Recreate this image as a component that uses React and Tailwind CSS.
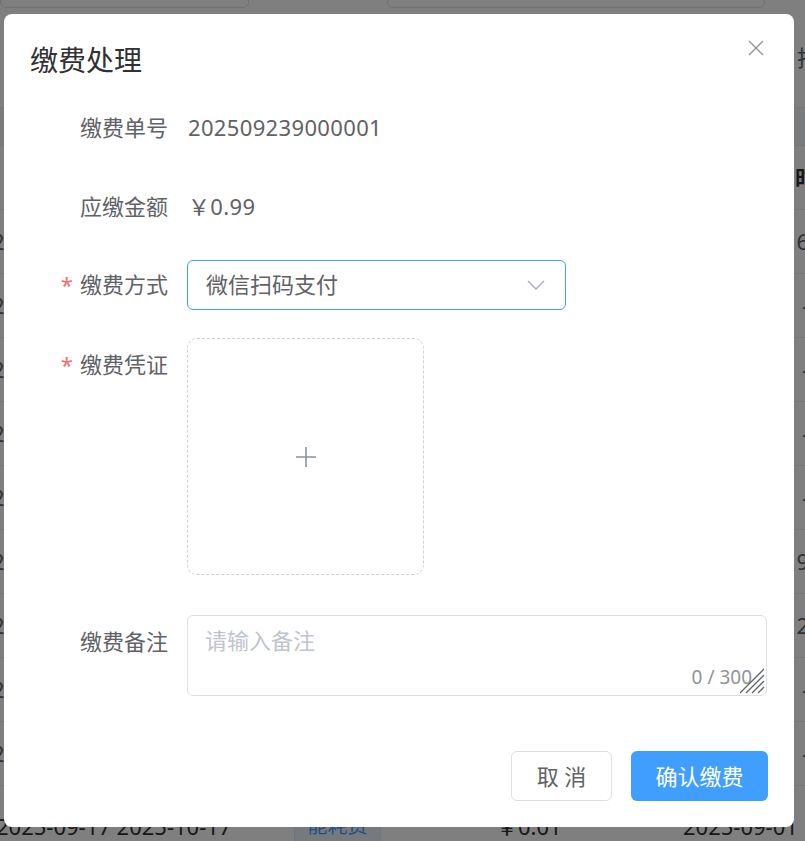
import React from "react";

const font = { fontFamily: '"Noto Sans", "Noto Sans CJK SC", sans-serif' };

function BgRow({ left, right }) {
  return (
    <div className="h-[64px] flex items-center justify-between border-b border-[#ebeef5] text-[22px] text-[#606266] shrink-0">
      <span className="-ml-[8px]">{left}</span>
      <span className="-mr-[4px]">{right}</span>
    </div>
  );
}

export default function App() {
  return (
    <div className="relative w-[805px] h-[841px] overflow-hidden bg-white" style={font}>
      {/* Background page */}
      <div className="flex flex-col w-[805px]">
        <div className="flex h-[8px] items-end">
          <div className="w-[249px] h-[40px] border border-[#dcdfe6] rounded-[6px] shrink-0"></div>
          <div className="w-[138px] shrink-0"></div>
          <div className="w-[378px] h-[40px] border border-[#dcdfe6] rounded-[6px] shrink-0"></div>
        </div>
        <div className="h-[100px] flex items-center justify-end text-[22px] text-[#606266] border-b border-[#ebeef5]">
          <span className="-mr-[36px]">批量</span>
        </div>
        <div className="h-[38px] bg-[#f5f7fa] border-b border-[#ebeef5]"></div>
        <div className="h-[64px] flex items-center justify-end text-[22px] font-bold text-[#303133] border-b border-[#ebeef5]">
          <span className="-mr-[34px]">时间</span>
        </div>
        <BgRow left="2" right="6" />
        <BgRow left="2" right="-" />
        <BgRow left="2" right="-" />
        <BgRow left="2" right="-" />
        <BgRow left="2" right="-" />
        <BgRow left="2" right="9" />
        <BgRow left="2" right="2" />
        <BgRow left="2" right="-" />
        <BgRow left="2" right="-" />
        <div className="h-[64px] flex items-center text-[22px] text-[#303133] shrink-0 pt-[16px]">
          <span className="w-[298px] -ml-[4px] shrink-0">2025-09-17 2025-10-17</span>
          <span className="w-[87px] h-[34px] rounded-[4px] bg-[#ecf5ff] border border-[#d9ecff] text-[#409eff] flex items-center justify-center text-[20px] shrink-0">能耗费</span>
          <span className="ml-[115px] w-[187px] shrink-0">￥0.01</span>
          <span>2025-09-01</span>
        </div>
      </div>

      {/* Overlay */}
      <div className="absolute inset-0 bg-black/50"></div>

      {/* Dialog */}
      <div className="absolute left-[4px] top-[14px] w-[790px] h-[813px] bg-white rounded-[8px] flex flex-col">
        <button className="absolute left-[744px] top-[26px] w-[16px] h-[16px] text-[#909399]">
          <svg width="16" height="16" viewBox="0 0 16 16" fill="none" stroke="currentColor" strokeWidth="1.4">
            <path d="M1 1 L15 15 M15 1 L1 15" />
          </svg>
        </button>

        <div className="pl-[26px] pt-[28px] h-[64px] text-[28px] leading-[36px] text-[#303133]">缴费处理</div>

        <div className="flex flex-col mt-[25px]">
          {/* row 1 */}
          <div className="flex h-[49px] items-center">
            <div className="w-[164px] text-right text-[22px] text-[#606266] shrink-0">缴费单号</div>
            <div className="ml-[20px] text-[22px] tracking-[0.35px] text-[#606266]">202509239000001</div>
          </div>
          {/* row 2 */}
          <div className="flex h-[49px] items-center mt-[30px]">
            <div className="w-[164px] text-right text-[22px] text-[#606266] shrink-0">应缴金额</div>
            <div className="ml-[20px] text-[22px] tracking-[0.35px] text-[#606266]">￥0.99</div>
          </div>
          {/* row 3 */}
          <div className="flex h-[49px] items-center mt-[29px]">
            <div className="w-[164px] text-right text-[22px] text-[#606266] shrink-0">
              <span className="text-[#f56c6c] mr-[7px]">*</span>缴费方式
            </div>
            <div className="ml-[19px] w-[379px] h-[50px] border border-[#409eff] rounded-[6px] flex items-center justify-between pl-[18px] pr-[20px]">
              <span className="text-[22px] text-[#606266]">微信扫码支付</span>
              <svg width="18" height="10" viewBox="0 0 18 10" fill="none" stroke="#a8abb2" strokeWidth="1.4">
                <path d="M1 1 L9 9 L17 1" />
              </svg>
            </div>
          </div>
          {/* row 4 */}
          <div className="flex mt-[29px]">
            <div className="w-[164px] h-[49px] flex items-center justify-end text-[22px] text-[#606266] shrink-0 mt-[2px]">
              <span className="text-[#f56c6c] mr-[7px]">*</span>缴费凭证
            </div>
            <div className="ml-[19px] w-[237px] h-[237px] border border-dashed border-[#cdd0d6] rounded-[10px] flex items-center justify-center">
              <svg width="22" height="22" viewBox="0 0 22 22" fill="none" stroke="#8c939d" strokeWidth="1.6">
                <path d="M11 1 V21 M1 11 H21" />
              </svg>
            </div>
          </div>
          {/* row 5 */}
          <div className="flex mt-[40px]">
            <div className="w-[164px] h-[52px] flex items-center justify-end text-[22px] text-[#606266] shrink-0">缴费备注</div>
            <div className="relative ml-[19px] w-[580px] h-[81px] border border-[#dcdfe6] rounded-[6px] pl-[17px] pt-[8px]">
              <span className="text-[22px] text-[#c0c4cc]">请输入备注</span>
              <span className="absolute right-[14px] bottom-[4px] text-[19px] text-[#909399]">0 / 300</span>
              <svg className="absolute right-[1px] bottom-[1px]" width="26" height="26" viewBox="0 0 26 26" fill="none" stroke="#606266" strokeWidth="1.3">
                <path d="M25 1 L1 25 M25 7 L7 25 M25 13 L13 25 M25 19 L19 25" />
              </svg>
            </div>
          </div>
        </div>

        <div className="flex justify-end gap-[19px] pr-[26px] mt-[55px]">
          <button className="w-[101px] h-[50px] border border-[#dcdfe6] rounded-[6px] text-[22px] text-[#606266] bg-white">取 消</button>
          <button className="w-[137px] h-[50px] rounded-[6px] text-[22px] text-white bg-[#409eff]">确认缴费</button>
        </div>
      </div>
    </div>
  );
}
